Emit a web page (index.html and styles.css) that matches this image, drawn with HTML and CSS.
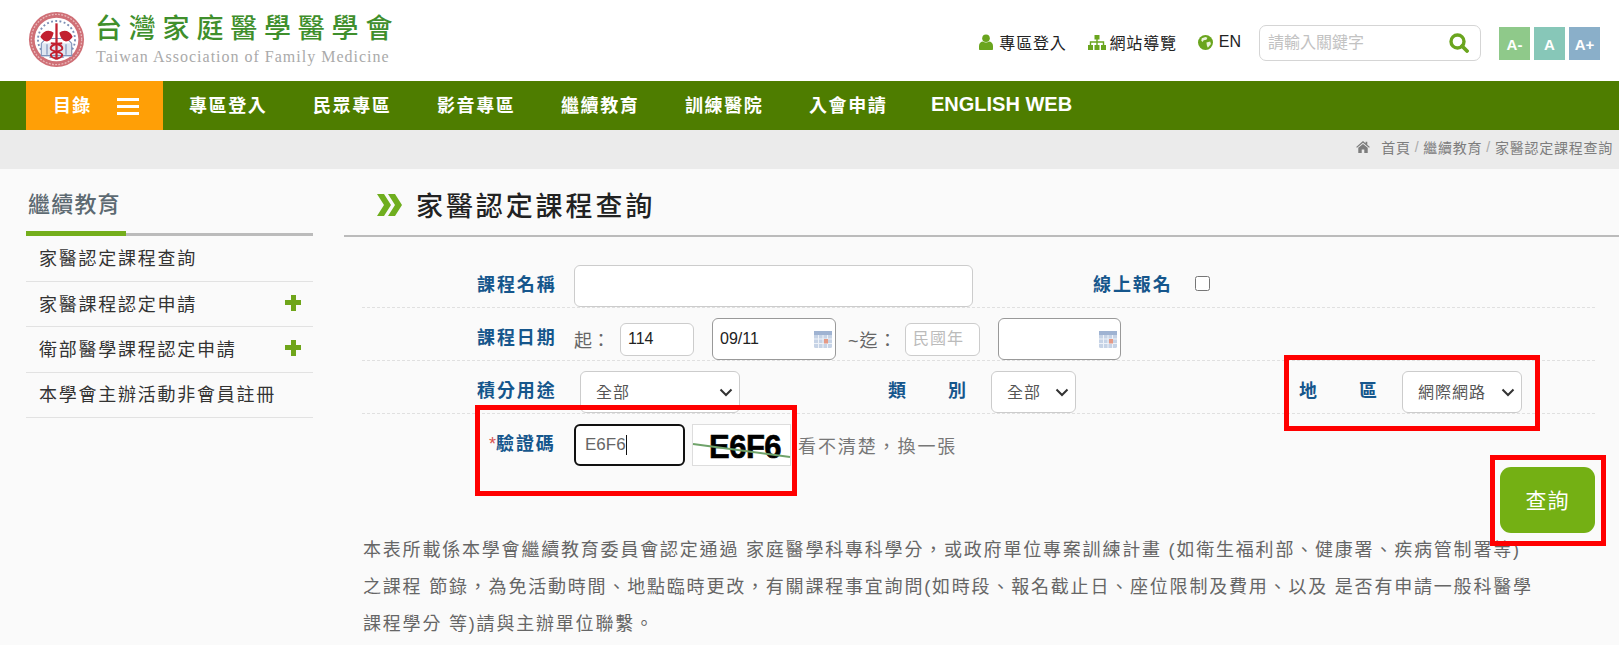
FILE: index.html
```html
<!doctype html>
<html lang="zh-Hant">

<head>
  <meta charset="utf-8">
  <meta name="viewport" content="width=device-width, initial-scale=1">
  <link rel="stylesheet" href="styles.css">
  <title>家醫認定課程查詢</title>
</head>

<body>
  <div class="page">
    <header class="top">
      <a class="logo">
        <svg class="emblem" viewBox="0 0 60 60">
          <circle cx="30" cy="30" r="29" fill="#cf6f76" />
          <circle cx="30" cy="30" r="26.5" fill="none" stroke="#e9b7b9" stroke-width="1.4" stroke-dasharray="2 1.4" />
          <circle cx="30" cy="30" r="23" fill="#fff" />
          <circle cx="30" cy="30" r="19.5" fill="none" stroke="#7d8fb4" stroke-width="2" stroke-dasharray="2 2.5" />
          <path d="M14 34h32v14H14z" fill="#dfe6f1" />
          <path d="M14 34l5-5h22l5 5M14 34v13h32V34M20 35v11M40 35v11" fill="none" stroke="#7f93ba" stroke-width="1.2" />
          <path d="M30 13v38" stroke="#c2202f" stroke-width="2.4" />
          <path d="M13 27c3-7 10-8 14-4-1 4-3 9-7 9-3 0-6-3-7-5zM47 27c-3-7-10-8-14-4 1 4 3 9 7 9 3 0 6-3 7-5z" fill="#c2202f" />
          <path d="M24 34c8 0 13 3 12 6s-12 3-12 6 5 4 8 4M36 34c-8 0-13 3-12 6s12 3 12 6-5 4-8 4" fill="none" stroke="#c2202f" stroke-width="2" />
        </svg>
        <span class="logo-text">
          <span class="logo-zh">台灣家庭醫學醫學會</span>
          <span class="logo-en">Taiwan Association of Family Medicine</span>
        </span>
      </a>
      <div class="tools">
        <a class="tool">
          <svg class="tool-icon" viewBox="0 0 14 16">
            <circle cx="7" cy="4.2" r="3.8" fill="#6aa51e" />
            <path d="M0 15v-3c0-3 2-4.500 4-4.500 1.800 1.300 4.200 1.300 6 0 2 0 4 1.500 4 4.500v3c0 .6-.4 1-1 1H1c-.6 0-1-.4-1-1z" fill="#6aa51e" />
          </svg>
          專區登入
        </a>
        <a class="tool">
          <svg class="tool-icon wide" viewBox="0 0 18 15">
            <path d="M6.500 0h5v4.500h-5zM0 10h5v5H0zM6.500 10h5v5h-5zM13 10h5v5h-5z" fill="#6aa51e" />
            <path d="M9 4v6M2.500 10V7h13v3" fill="none" stroke="#6aa51e" stroke-width="1.400" />
          </svg>
          網站導覽
        </a>
        <a class="tool tool-en">
          <svg class="tool-icon" viewBox="0 0 16 16">
            <circle cx="8" cy="8" r="8" fill="#6aa51e" />
            <path d="M4 3.500l4-1.500 2 1-1 2-3 .5-1 2-1.500-1.500zM9 8l4-1 .8 2.500-3.300 4-1-2z" fill="#eaf3dc" />
          </svg>
          EN
        </a>
        <div class="search">
          <input class="search-input" placeholder="請輸入關鍵字">
          <svg class="search-icon" viewBox="0 0 20 20">
            <circle cx="8.500" cy="8.500" r="6.500" fill="none" stroke="#6aa51e" stroke-width="3.400" />
            <path d="M13 13l5 5" stroke="#6aa51e" stroke-width="3.800" stroke-linecap="round" />
          </svg>
        </div>
        <div class="sizes">
          <a class="size size-s">A-</a>
          <a class="size size-m">A</a>
          <a class="size size-l">A+</a>
        </div>
      </div>
    </header>

    <nav class="nav">
      <a class="nav-menu">
        目錄
        <span class="burger"><i></i><i></i><i></i></span>
      </a>
      <a class="nav-item">專區登入</a>
      <a class="nav-item">民眾專區</a>
      <a class="nav-item">影音專區</a>
      <a class="nav-item">繼續教育</a>
      <a class="nav-item">訓練醫院</a>
      <a class="nav-item">入會申請</a>
      <a class="nav-item nav-en">ENGLISH WEB</a>
    </nav>

    <div class="crumb">
      <svg class="crumb-home" viewBox="0 0 16 14">
        <path d="M8 0l3 2.600V1h2v3.300L16 7l-1 1-7-6-7 6-1-1z" fill="#7d7d7d" />
        <path d="M2.500 8L8 3.400 13.500 8v6H9.500v-4h-3v4h-4z" fill="#7d7d7d" />
      </svg>
      <span>首頁</span><em>/</em><span>繼續教育</span><em>/</em><span>家醫認定課程查詢</span>
    </div>

    <div class="content">
      <aside class="side">
        <h2 class="side-title"><span>繼續教育</span></h2>
        <ul class="side-list">
          <li>家醫認定課程查詢</li>
          <li>家醫課程認定申請<b class="plus"></b></li>
          <li>衛部醫學課程認定申請<b class="plus"></b></li>
          <li>本學會主辦活動非會員註冊</li>
        </ul>
      </aside>

      <main class="main">
        <h1 class="title">
          <svg class="title-icon" viewBox="0 0 25 22">
            <path d="M0 0h7l7 11-7 11H0l7-11z" fill="#6fae1e" />
            <path d="M11 0h7l7 11-7 11h-7l7-11z" fill="#6fae1e" />
          </svg>
          家醫認定課程查詢
        </h1>

        <form class="form">
          <div class="row">
            <label class="label">課程名稱</label>
            <input class="field name-field">
            <label class="label online-label">線上報名</label>
            <input class="check" type="checkbox">
          </div>
          <div class="row">
            <label class="label">課程日期</label>
            <span class="hint start-hint">起：</span>
            <input class="field year-field" value="114">
            <div class="date">
              <span>09/11</span>
              <svg class="cal" viewBox="0 0 18 17">
                <rect width="18" height="17" rx="1.500" fill="#c6d3e6" />
                <rect width="18" height="4" fill="#9fb3d2" />
                <path d="M0 8h18M0 12.500h18M4.500 4v13M9 4v13M13.500 4v13" stroke="#eef2f8" stroke-width="1" />
                <rect x="10" y="8" width="4" height="4.500" fill="#e59a86" />
              </svg>
            </div>
            <span class="hint end-hint">~迄：</span>
            <input class="field year-field end-year" placeholder="民國年">
            <div class="date end-date">
              <span></span>
              <svg class="cal" viewBox="0 0 18 17">
                <rect width="18" height="17" rx="1.500" fill="#c6d3e6" />
                <rect width="18" height="4" fill="#9fb3d2" />
                <path d="M0 8h18M0 12.500h18M4.500 4v13M9 4v13M13.500 4v13" stroke="#eef2f8" stroke-width="1" />
                <rect x="10" y="8" width="4" height="4.500" fill="#e59a86" />
              </svg>
            </div>
          </div>
          <div class="row">
            <label class="label">積分用途</label>
            <select class="pick use-pick"><option>全部</option></select>
            <label class="label wide-label type-label"><span>類</span><span>別</span></label>
            <select class="pick type-pick"><option>全部</option></select>
            <label class="label wide-label area-label"><span>地</span><span>區</span></label>
            <select class="pick area-pick"><option>網際網路</option></select>
          </div>
          <div class="row row-last">
            <label class="label code-label"><i>*</i>驗證碼</label>
            <div class="code-input">E6F6<i class="caret"></i></div>
            <div class="captcha">
              <span>E6F6</span>
              <svg class="captcha-line" viewBox="0 0 99 42">
                <path d="M1 20L98 33" stroke="#6fa36a" stroke-width="2" />
              </svg>
            </div>
            <a class="refresh">看不清楚，換一張</a>
          </div>
          <div class="actions">
            <button class="submit" type="button">查詢</button>
          </div>
        </form>

        <p class="note">本表所載係本學會繼續教育委員會認定通過 家庭醫學科專科學分，或政府單位專案訓練計畫 (如衛生福利部、健康署、疾病管制署等)<br>之課程 節錄，為免活動時間、地點臨時更改，有關課程事宜詢問(如時段、報名截止日、座位限制及費用、以及 是否有申請一般科醫學<br>課程學分 等)請與主辦單位聯繫。</p>
      </main>
    </div>

    <div class="mark mark-code"></div>
    <div class="mark mark-area"></div>
    <div class="mark mark-submit"></div>
  </div>
</body>

</html>
```

FILE: styles.css
```css
* {
  box-sizing: border-box;
}

body {
  margin: 0;
  font-family: "Liberation Sans", "Noto Sans CJK TC", sans-serif;
  color: #333;
  background-color: #fafafa;
}

.page {
  position: relative;
}

h1,
h2,
ul,
p {
  margin: 0;
  padding: 0;
}

/* top */
.top {
  display: flex;
  height: 81px;
  background: #fff;
}

.logo {
  display: flex;
  margin-left: 28px;
  padding-top: 11px;
}

.emblem {
  width: 57px;
  height: 57px;
}

.logo-text {
  display: flex;
  flex-direction: column;
  margin-left: 10px;
  padding-top: 2px;
}

.logo-zh {
  font-size: 27px;
  line-height: 32px;
  letter-spacing: 6.800px;
  color: #3f8f2c;
  font-weight: 500;
}

.logo-en {
  font-family: "Liberation Serif", serif;
  font-size: 16px;
  line-height: 20px;
  letter-spacing: 1px;
  color: #aaa;
  margin-top: 2px;
  margin-left: 1px;
}

.tools {
  display: flex;
  align-items: center;
  margin-left: auto;
  padding-right: 19px;
  height: 86px;
}

.tool {
  display: flex;
  align-items: center;
  margin-right: 21px;
  margin-bottom: 2px;
  font-size: 16px;
  letter-spacing: .800px;
  color: #222;
}

.tool-icon {
  width: 14px;
  height: 16px;
  margin-right: 6px;
}

.tool-icon.wide {
  width: 18px;
  height: 15px;
  margin-right: 4px;
}

.tool-en {
  letter-spacing: 0;
  margin-right: 18px;
}

.tool-en .tool-icon {
  width: 15px;
  height: 15px;
}

.search {
  display: flex;
  align-items: center;
  width: 222px;
  height: 36px;
  border: 1px solid #d5d5d5;
  border-radius: 7px;
  padding: 0 11px 0 8px;
  background: #fff;
}

.search-input {
  flex: 1;
  min-width: 0;
  border: none;
  outline: none;
  padding: 0;
  font: inherit;
  font-size: 16px;
  background: none;
}

.search-input::placeholder {
  color: #c2c2c2;
}

.search-icon {
  width: 20px;
  height: 20px;
}

.sizes {
  display: flex;
  gap: 4px;
  margin-left: 18px;
}

.size {
  display: block;
  width: 31px;
  height: 33px;
  line-height: 35px;
  text-align: center;
  color: #fff;
  font-size: 15px;
  font-weight: bold;
}

.size-s {
  background: #8fc98a;
}

.size-m {
  background: #87c7b8;
}

.size-l {
  background: #8aafc9;
}

/* nav */
.nav {
  display: flex;
  height: 49px;
  padding-left: 26px;
  background: #4e7d00;
}

.nav-menu {
  display: flex;
  align-items: center;
  width: 137px;
  padding: 0 0 4px 27px;
  background: #ff9f06;
  color: #fff;
  font-size: 18px;
  font-weight: bold;
  letter-spacing: 1.200px;
}

.burger {
  display: flex;
  flex-direction: column;
  gap: 4px;
  margin: 6px 0 0 26px;
  width: 22px;
}

.burger i {
  display: block;
  height: 3px;
  background: #fff;
}

.nav-item {
  display: flex;
  align-items: center;
  margin-left: 26px;
  margin-right: 19.600px;
  padding-bottom: 4px;
  color: #fff;
  font-size: 18px;
  font-weight: bold;
  letter-spacing: 1.600px;
  white-space: nowrap;
}

.nav-en {
  margin-left: 24px;
  font-size: 20px;
  letter-spacing: 0;
  padding-bottom: 2px;
}

/* breadcrumb */
.crumb {
  display: flex;
  align-items: center;
  justify-content: flex-end;
  height: 39px;
  padding: 0 6px 5px 0;
  background: #ebebeb;
  color: #7d7d7d;
  font-size: 14px;
  letter-spacing: .750px;
}

.crumb-home {
  width: 14px;
  height: 12px;
  margin-right: 11px;
}

.crumb em {
  font-style: normal;
  color: #aaa;
  margin: 0 4px;
}

/* layout */
.content {
  display: flex;
  align-items: flex-start;
}

.side {
  width: 287px;
  margin-left: 26px;
  flex: none;
}

.side-title {
  border-bottom: 3px solid #bbb;
  padding-top: 22px;
  color: #5d6a72;
  font-size: 22px;
  font-weight: 500;
  letter-spacing: 1.200px;
}

.side-title span {
  display: block;
  width: 100px;
  height: 45px;
  margin-bottom: -3px;
  padding-left: 2px;
  line-height: 28px;
  border-bottom: 5px solid #74ae1c;
  white-space: nowrap;
}

.side-list {
  list-style: none;
}

.side-list li {
  display: flex;
  align-items: center;
  justify-content: space-between;
  height: 45.330px;
  padding: 0 12px 3px 13px;
  border-bottom: 1px solid #e2e2e2;
  font-size: 18px;
  letter-spacing: 1.750px;
  color: #333;
}

.side-list li:first-child {
  height: 46px;
}

.plus {
  width: 16px;
  height: 16px;
  background: linear-gradient(#6fa51a, #6fa51a) center / 16px 5px no-repeat, linear-gradient(#6fa51a, #6fa51a) center / 5px 16px no-repeat;
}

.main {
  flex: 1;
  margin-left: 31px;
  min-width: 0;
}

.title {
  display: flex;
  align-items: center;
  height: 68px;
  padding: 5px 0 0 33px;
  border-bottom: 2px solid #bbb;
  font-size: 27px;
  font-weight: 500;
  letter-spacing: 2.900px;
  color: #222;
}

.title-icon {
  width: 25px;
  height: 22px;
  margin-right: 14px;
}

/* form */
.form {
  margin: 18px 24px 0 18px;
}

.row {
  display: flex;
  align-items: center;
  height: 53px;
  padding: 10px 0 0 115px;
  border-bottom: 1px dashed #e0e0e0;
}

.row-last {
  border-bottom: none;
  height: 52px;
}

.label {
  flex: none;
  width: 97px;
  margin-bottom: 6px;
  font-size: 18px;
  font-weight: bold;
  letter-spacing: 1.900px;
  color: #15568c;
}

.field {
  height: 33px;
  padding: 0 7px;
  border: 1px solid #ccc;
  border-radius: 6px;
  background: #fff;
  font: inherit;
  font-size: 16px;
  color: #222;
  outline: none;
}

.field::placeholder {
  color: #bbb;
  letter-spacing: 1px;
}

.name-field {
  width: 399px;
  height: 42px;
}

.online-label {
  width: 78px;
  margin-left: 120px;
  white-space: nowrap;
}

.check {
  width: 15px;
  height: 15px;
  margin: 0 0 6px 24px;
}

.hint {
  flex: none;
  font-size: 18px;
  color: #666;
  white-space: nowrap;
}

.start-hint {
  width: 46px;
}

.year-field {
  width: 74px;
}

.date {
  display: flex;
  align-items: center;
  justify-content: space-between;
  width: 124px;
  height: 42px;
  margin-left: 18px;
  padding: 0 3px 0 7px;
  border: 1px solid #999;
  border-radius: 6px;
  background: #fff;
  font-size: 16px;
  color: #222;
}

.cal {
  width: 18px;
  height: 17px;
}

.end-hint {
  width: 57px;
  margin-left: 12px;
  letter-spacing: 1px;
}

.end-year {
  width: 75px;
}

.end-date {
  width: 123px;
}

.pick {
  appearance: none;
  height: 42px;
  padding: 0 0 0 15px;
  border: 1px solid #ccc;
  border-radius: 6px;
  background: #fff url("data:image/svg+xml,%3Csvg xmlns='http://www.w3.org/2000/svg' width='14' height='9'%3E%3Cpath d='M1.500 1.500L7 7l5.500-5.500' fill='none' stroke='%23333' stroke-width='2'/%3E%3C/svg%3E") no-repeat right 6px center;
  font: inherit;
  font-size: 16px;
  letter-spacing: 1px;
  color: #555;
  outline: none;
}

.use-pick {
  width: 160px;
  margin-left: 6px;
}

.wide-label {
  display: flex;
  justify-content: space-between;
  letter-spacing: 0;
}

.type-label {
  width: 78px;
  margin-left: 148px;
}

.type-pick {
  width: 85px;
  margin-left: 25px;
}

.area-label {
  width: 78px;
  margin-left: 223px;
}

.area-pick {
  width: 120px;
  margin-left: 25px;
}

.code-label {
  padding-left: 12px;
  white-space: nowrap;
}

.code-label i {
  font-style: normal;
  font-weight: normal;
  color: #d9534f;
  letter-spacing: 0;
}

.code-input {
  display: flex;
  align-items: center;
  width: 111px;
  height: 42px;
  padding-left: 9px;
  border: 2px solid #111;
  border-radius: 6px;
  background: #fff;
  font-size: 17px;
  color: #666;
}

.caret {
  display: block;
  width: 1px;
  height: 20px;
  background: #111;
}

.captcha {
  position: relative;
  width: 99px;
  height: 42px;
  margin-left: 7px;
  padding: 4px 0 0 16px;
  border: 1px solid #ddd;
  background: #fff;
  color: #000;
  font-size: 31px;
  font-weight: bold;
  line-height: 36px;
}

.captcha span {
  display: block;
  transform: scaleY(1.050);
  letter-spacing: -.500px;
  -webkit-text-stroke: .6px #000;
}

.captcha-line {
  position: absolute;
  left: -1px;
  top: -1px;
  width: 99px;
  height: 42px;
}

.refresh {
  margin-left: 7px;
  font-size: 18px;
  letter-spacing: 1.900px;
  color: #777;
}

.actions {
  display: flex;
  justify-content: flex-end;
  margin-top: 1px;
}

.submit {
  width: 95px;
  height: 66px;
  padding: 0 0 2px;
  border: none;
  border-radius: 11px;
  background: #74b014;
  color: #fff;
  font: inherit;
  font-size: 21px;
  letter-spacing: 1px;
}

.note {
  margin: -1px 0 0 19px;
  font-size: 18px;
  line-height: 37px;
  letter-spacing: 1.800px;
  color: #666;
  white-space: nowrap;
}

/* red annotation boxes over the page */
.mark {
  position: absolute;
  border: 5px solid #f00;
}

.mark-code {
  left: 475px;
  top: 405px;
  width: 322px;
  height: 91px;
}

.mark-area {
  left: 1284px;
  top: 355px;
  width: 256px;
  height: 76px;
}

.mark-submit {
  left: 1490px;
  top: 455px;
  width: 116px;
  height: 91px;
}
```
